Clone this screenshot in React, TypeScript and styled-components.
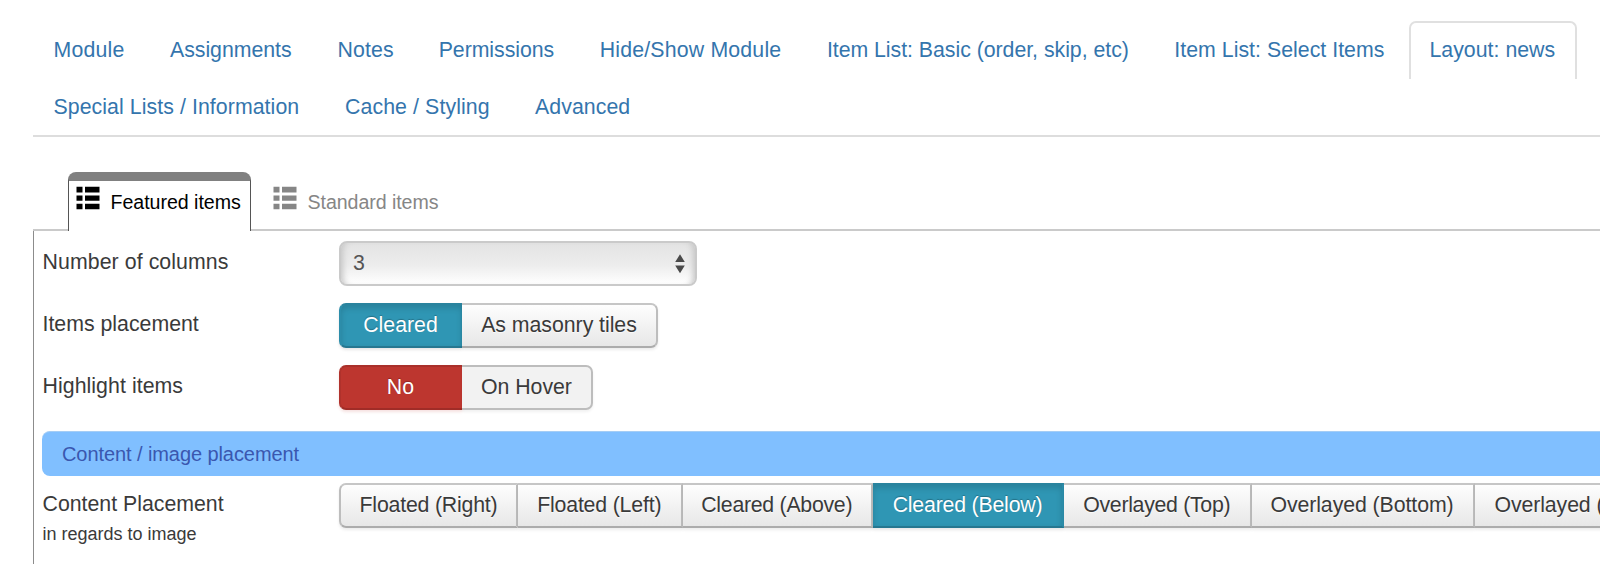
import React from "react";
import styled, { createGlobalStyle, css } from "styled-components";

const GlobalStyle = createGlobalStyle`
  * { box-sizing: border-box; }
  body {
    margin: 0;
    background: #fff;
    color: #3a3a3a;
    font-family: "Liberation Sans", Arial, sans-serif;
    font-size: 21.3px;
    overflow: hidden;
  }
`;

const Page = styled.div`
  width: 1600px;
  height: 564px;
  padding-left: 33px;
  overflow: hidden;
`;

const ModuleTabs = styled.nav`
  display: flex;
  flex-direction: column;
  height: 137px;
  padding-top: 21px;
  border-bottom: 2px solid #ddd;
`;

const TabLine = styled.div`
  display: flex;
  gap: 4px;
  height: 57px;
`;

const ModuleTab = styled.a<{ $width: number; $tracking: number; $active?: boolean }>`
  flex: none;
  width: ${(p) => p.$width}px;
  height: ${(p) => (p.$active ? 58 : 57)}px;
  padding-left: 20.5px;
  line-height: 59px;
  letter-spacing: ${(p) => p.$tracking}px;
  color: #3475ad;
  white-space: nowrap;
  ${(p) =>
    p.$active &&
    css`
      padding-left: 18.5px;
      line-height: 55px;
      border: 2px solid #e0e0e0;
      border-bottom: 0;
      border-radius: 7px 7px 0 0;
    `}
`;

const LayoutTabs = styled.div`
  display: flex;
  align-items: flex-end;
  height: 94px;
`;

const TabEdge = styled.div<{ $width?: number }>`
  ${(p) => (p.$width ? `flex: none; width: ${p.$width}px;` : "flex: 1;")}
  border-bottom: 2px solid #cacaca;
`;

const LayoutTab = styled.div<{ $active?: boolean }>`
  display: flex;
  align-items: flex-start;
  flex: none;
  width: ${(p) => (p.$active ? 183 : 210)}px;
  height: 59px;
  padding: ${(p) => (p.$active ? "5px 0 0 7px" : "14px 0 0 22px")};
  color: ${(p) => (p.$active ? "#000" : "#868686")};
  font-size: 19.6px;
  line-height: 24px;
  white-space: nowrap;
  ${(p) =>
    p.$active
      ? css`
          border: 1px solid #555;
          border-top: 9px solid #808080;
          border-bottom: 0;
          border-radius: 8px 8px 0 0;
        `
      : css`
          border-bottom: 2px solid #cacaca;
        `}
`;

const LayoutTabText = styled.span<{ $tracking: number }>`
  margin: 4px 0 0 10.5px;
  letter-spacing: ${(p) => p.$tracking}px;
`;

const Panel = styled.main`
  height: 333px;
  padding: 10px 0 0 8px;
  border-left: 1px solid #8c8c8c;
`;

const FieldRow = styled.div<{ $height?: number }>`
  display: flex;
  align-items: flex-start;
  height: ${(p) => p.$height ?? 62}px;
`;

const Label = styled.label<{ $tracking?: number }>`
  flex: none;
  width: 297px;
  height: 46px;
  padding-left: 0.5px;
  line-height: 42.6px;
  letter-spacing: ${(p) => p.$tracking ?? 0}px;
  white-space: nowrap;
`;

const Hint = styled.small`
  display: block;
  margin-top: -7px;
  font-size: 18px;
  line-height: 30px;
  letter-spacing: 0;
`;

const SelectBox = styled.div`
  display: flex;
  align-items: center;
  justify-content: space-between;
  width: 358px;
  height: 45px;
  padding: 0 10px 0 12px;
  color: #555;
  border: 2px solid #cacaca;
  border-radius: 8px;
  background: linear-gradient(#e3e3e3, #ededed 55%, #fff);
  box-shadow: inset 7px 0 6px -5px #c4c4c4, inset -7px 0 6px -5px #c4c4c4;
`;

const ButtonGroup = styled.div`
  display: flex;
  flex: none;
  height: 45px;
`;

type Tone = "plain" | "flat" | "teal" | "red";

const tones = {
  plain: css`
    color: #3a3a3a;
    background: linear-gradient(#fff, #e6e6e6) border-box;
    border-color: #c6c6c6 #bdbdbd #acacac;
    text-shadow: 0 1px 1px rgba(255, 255, 255, 0.75);
    box-shadow: 0 2px 3px rgba(0, 0, 0, 0.08);
  `,
  flat: css`
    color: #3a3a3a;
    background: #f2f2f2;
    border-color: #bdbdbd;
    box-shadow: 0 2px 3px rgba(0, 0, 0, 0.06);
  `,
  teal: css`
    color: #fff;
    background: #2f96b4;
    border-color: #2a839e #2c8daa #267790;
    text-shadow: 0 -1px 1px rgba(0, 0, 0, 0.25);
    box-shadow: inset 0 3px 6px rgba(0, 0, 0, 0.15), 0 2px 3px rgba(0, 0, 0, 0.1);
  `,
  red: css`
    color: #fff;
    background: #bd362f;
    border-color: #a9302a #b0322c #a02c27;
    text-shadow: 0 -1px 1px rgba(0, 0, 0, 0.25);
    box-shadow: 0 2px 3px rgba(189, 54, 47, 0.15);
  `,
};

const GroupButton = styled.button<{ $width: number; $tracking: number; $tone: Tone }>`
  flex: none;
  width: ${(p) => p.$width}px;
  height: 45px;
  padding: 0 0 2px;
  font: inherit;
  line-height: 38px;
  letter-spacing: ${(p) => p.$tracking}px;
  text-align: center;
  white-space: nowrap;
  border-width: 2px;
  border-style: solid;
  & + & { border-left-width: 0; }
  &:first-child { border-radius: 7px 0 0 7px; }
  &:last-child { border-radius: 0 7px 7px 0; }
  ${(p) => tones[p.$tone]}
  ${(p) => p.$tone !== "plain" && "&:first-child { border-right-width: 0; padding-right: 2px; }"}
`;

const SectionHeading = styled.div`
  height: 45px;
  margin-bottom: 7px;
  padding-left: 20px;
  line-height: 44px;
  font-size: 20px;
  letter-spacing: -0.08px;
  color: #3a57af;
  background: #80bfff;
  border-top: 1px solid #a5cdf5;
  border-radius: 8px 0 0 8px;
`;

const ListIcon = () => (
  <svg width="24" height="24" viewBox="0 0 24 24" fill="currentColor" aria-hidden="true">
    <path d="M0.5 0.8h6v5.7h-6zM9 0.8h14.5v5.7H9zM0.5 9.4h6v5.4h-6zM9 9.4h14.5v5.4H9zM0.5 17.7h6v5.5h-6zM9 17.7h14.5v5.5H9z" />
  </svg>
);

const SelectArrows = () => (
  <svg width="10" height="20" viewBox="0 0 10 20" fill="#4a4a4a" aria-hidden="true">
    <path d="M5 0.3 9.8 8.1H.2zM.2 11.6h9.6L5 19.3z" />
  </svg>
);

interface TabData {
  text: string;
  width: number;
  tracking: number;
  active?: boolean;
}

const tabLines: TabData[][] = [
  [
    { text: "Module", width: 112.5, tracking: 0.2 },
    { text: "Assignments", width: 163.5, tracking: -0.03 },
    { text: "Notes", width: 97.2, tracking: 0.1 },
    { text: "Permissions", width: 157, tracking: -0.05 },
    { text: "Hide/Show Module", width: 223.2, tracking: 0.18 },
    { text: "Item List: Basic (order, skip, etc)", width: 343.4, tracking: -0.03 },
    { text: "Item List: Select Items", width: 251.2, tracking: 0.03 },
    { text: "Layout: news", width: 168, tracking: 0.02, active: true },
  ],
  [
    { text: "Special Lists / Information", width: 287.5, tracking: 0.07 },
    { text: "Cache / Styling", width: 186, tracking: 0.1 },
    { text: "Advanced", width: 136, tracking: 0.07 },
  ],
];

interface ButtonData {
  text: string;
  width: number;
  tracking?: number;
  tone?: Tone;
}

const itemsPlacement: ButtonData[] = [
  { text: "Cleared", width: 123, tone: "teal" },
  { text: "As masonry tiles", width: 196, tracking: -0.04 },
];

const highlightItems: ButtonData[] = [
  { text: "No", width: 123, tracking: 0.2, tone: "red" },
  { text: "On Hover", width: 131, tracking: -0.04, tone: "flat" },
];

const contentPlacement: ButtonData[] = [
  { text: "Floated (Right)", width: 179, tracking: -0.2 },
  { text: "Floated (Left)", width: 164.5, tracking: -0.18 },
  { text: "Cleared (Above)", width: 190.5, tracking: -0.27 },
  { text: "Cleared (Below)", width: 191, tracking: -0.2, tone: "teal" },
  { text: "Overlayed (Top)", width: 187.5, tracking: -0.3 },
  { text: "Overlayed (Bottom)", width: 223, tracking: -0.08 },
  { text: "Overlayed (Left)", width: 193, tracking: -0.1 },
];

const Choices = ({ options }: { options: ButtonData[] }) => (
  <ButtonGroup>
    {options.map((o) => (
      <GroupButton
        key={o.text}
        type="button"
        $width={o.width}
        $tracking={o.tracking ?? 0}
        $tone={o.tone ?? "plain"}
      >
        {o.text}
      </GroupButton>
    ))}
  </ButtonGroup>
);

export default function App() {
  return (
    <>
      <GlobalStyle />
      <Page>
        <ModuleTabs>
          {tabLines.map((line) => (
            <TabLine key={line[0].text}>
              {line.map((t) => (
                <ModuleTab key={t.text} $width={t.width} $tracking={t.tracking} $active={t.active}>
                  {t.text}
                </ModuleTab>
              ))}
            </TabLine>
          ))}
        </ModuleTabs>
        <LayoutTabs>
          <TabEdge $width={35} />
          <LayoutTab $active>
            <ListIcon />
            <LayoutTabText $tracking={-0.03}>Featured items</LayoutTabText>
          </LayoutTab>
          <LayoutTab>
            <ListIcon />
            <LayoutTabText $tracking={-0.06}>Standard items</LayoutTabText>
          </LayoutTab>
          <TabEdge />
        </LayoutTabs>
        <Panel>
          <FieldRow>
            <Label $tracking={0.08}>Number of columns</Label>
            <SelectBox>
              3
              <SelectArrows />
            </SelectBox>
          </FieldRow>
          <FieldRow>
            <Label>Items placement</Label>
            <Choices options={itemsPlacement} />
          </FieldRow>
          <FieldRow $height={66}>
            <Label $tracking={0.06}>Highlight items</Label>
            <Choices options={highlightItems} />
          </FieldRow>
          <SectionHeading>Content / image placement</SectionHeading>
          <FieldRow $height={80}>
            <Label>
              Content Placement
              <Hint>in regards to image</Hint>
            </Label>
            <Choices options={contentPlacement} />
          </FieldRow>
        </Panel>
      </Page>
    </>
  );
}
